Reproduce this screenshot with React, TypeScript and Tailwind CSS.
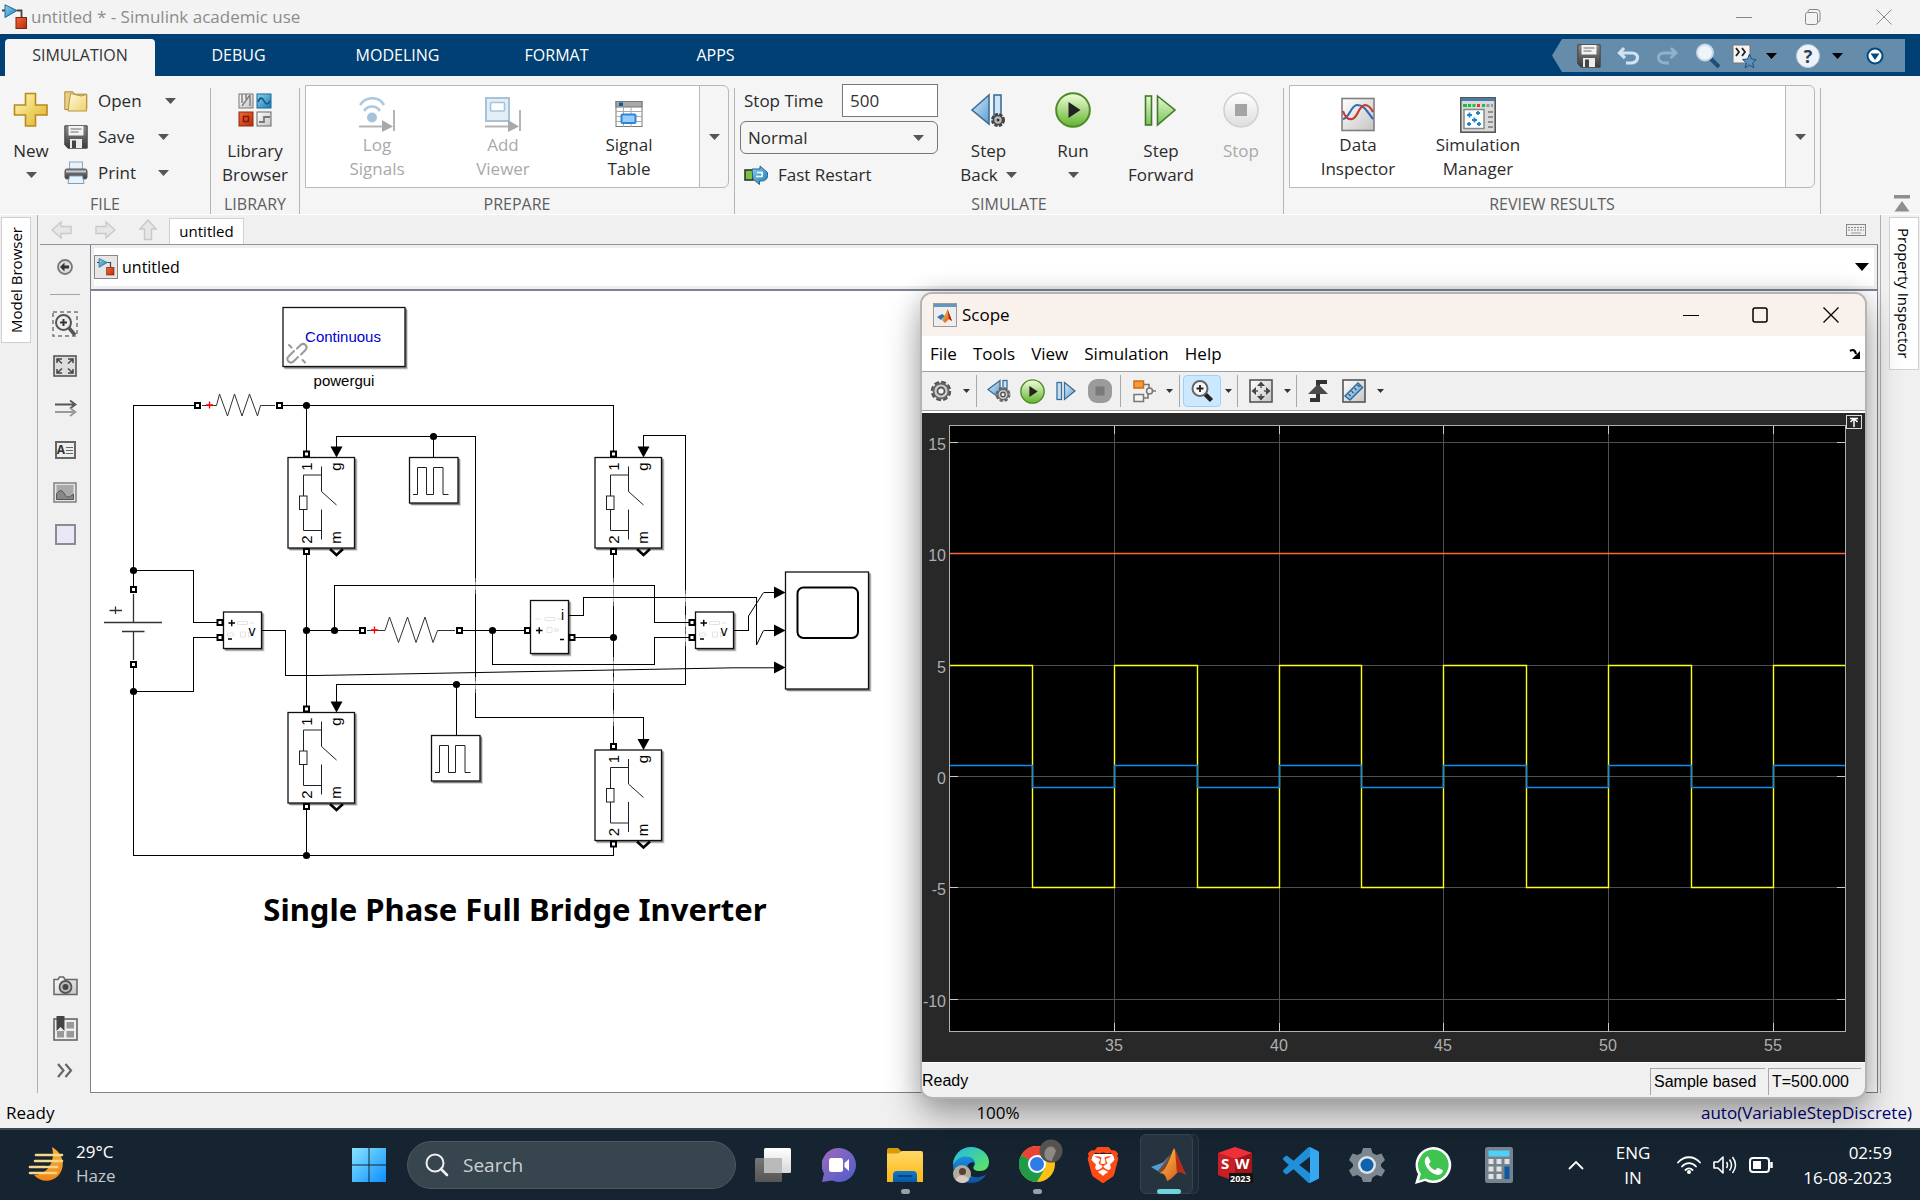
import type { ReactNode } from "react";
import { SiBrave } from "react-icons/si";

/* ---------- shared gradients ---------- */
function Defs() {
  const g = (id: string, a: string, b: string, diag = false) => (
    <linearGradient id={id} x1="0" y1="0" x2={diag ? "1" : "0"} y2="1">
      <stop offset="0" stopColor={a} />
      <stop offset="1" stopColor={b} />
    </linearGradient>
  );
  return (
    <svg className="absolute size-0" aria-hidden="true">
      <defs>
        {g("gold", "#fff9b8", "#e0b020", true)}
        {g("folder", "#fffbe0", "#efd06a", true)}
        {g("steel", "#8a8a8a", "#3a3a3a")}
        {g("silver", "#ffffff", "#c4c4c4", true)}
        {g("sky", "#d8ecfa", "#5a9cd0", true)}
        {g("blue", "#8fd0ee", "#1a7db8", true)}
        {g("red", "#f0693a", "#b82c08", true)}
        {g("green", "#f2ffdc", "#62b32e")}
        {g("lime", "#e4f8cf", "#7cc45c")}
        {g("fade", "#ffffff", "#dddddd")}
        {g("win", "#8be4ff", "#0a8fff", true)}
        {g("chat", "#a06ab8", "#4c5cd0", true)}
        {g("fold", "#ffd768", "#fcb912")}
        {g("dock", "#1478c8", "#0658a8")}
        {g("moon", "#f5b53a", "#f08418")}
        {g("edgeA", "#22b8e8", "#5fe85a", true)}
        {g("edgeB", "#1a8fe0", "#0c4fa0")}
        {g("flame", "#f8d040", "#d8401c", true)}
        {g("task", "#ffffff", "#d8d8d8")}
        {g("taskb", "#777777", "#555555")}
      </defs>
    </svg>
  );
}

function Svg({ w, h, vb, children, className = "" }: { w: number; h: number; vb?: string; children: ReactNode; className?: string }) {
  return (
    <svg width={w} height={h} viewBox={vb ?? `0 0 ${w} ${h}`} fill="none" className={`block shrink-0 ${className}`} aria-hidden="true">
      {children}
    </svg>
  );
}

function Caret({ small = false, className = "text-[#555]" }: { small?: boolean; className?: string }) {
  return small ? (
    <Svg w={7} h={4} className={className}><path d="M0 0h7L3.500 4z" fill="currentColor" /></Svg>
  ) : (
    <Svg w={11} h={6} className={className}><path d="M0 0h11L5.500 6z" fill="currentColor" /></Svg>
  );
}

/* ---------- ribbon icons ---------- */
const SimulinkIcon = ({ s = 26 }: { s?: number }) => (
  <Svg w={s} h={s} vb="0 0 26 26">
    <path d="M0 6.500h4M15 6.500h4.500V14" stroke="#444" strokeWidth="1.800" />
    <path d="M3 .8L15 6.500 3 13.500z" fill="url(#blue)" stroke="#1b6a99" />
    <rect x="14" y="13.500" width="10.500" height="11" fill="url(#red)" stroke="#7a2408" />
  </Svg>
);
const PlusIcon = () => (
  <Svg w={36} h={36}>
    <path d="M12.500 1.500h10v11.500h11.500v10H22.500v11h-10v-11H1.500V13h11z" fill="url(#gold)" stroke="#b78a1e" strokeWidth="1.600" />
  </Svg>
);
const OpenIcon = () => (
  <Svg w={24} h={22}>
    <path d="M.8 19.500V1.800h8l2 2.400h12V19z" fill="#e9cf86" stroke="#a8893f" />
    <path d="M6.500 3.500L17 6l5.500-1.500V21H4z" fill="url(#folder)" stroke="#b7963c" />
  </Svg>
);
const SaveIcon = () => (
  <Svg w={24} h={24}>
    <path d="M.8.8h22.400v22.400H4L.8 20z" fill="url(#steel)" stroke="#444" />
    <rect x="4.500" y="1" width="15" height="9.500" fill="#f3f3f3" />
    <path d="M6.500 4h11M6.500 7h8" stroke="#999" strokeWidth="1.400" />
    <rect x="6" y="14" width="12" height="9" fill="#ececec" />
    <rect x="8" y="15.500" width="4" height="7.500" fill="#444" />
  </Svg>
);
const PrintIcon = () => (
  <Svg w={24} h={24}>
    <rect x="5.500" y="1" width="13" height="9" fill="#e7f1fb" stroke="#89a8c2" />
    <rect x="1" y="8" width="22" height="10" rx="2" fill="url(#steel)" stroke="#555" />
    <path d="M2 10.500h20" stroke="#c9c9c9" strokeWidth="2" />
    <path d="M5.500 15h13l1.500 7.500H4z" fill="#eaf3fb" stroke="#7ba0bf" />
  </Svg>
);
const LibraryIcon = () => (
  <Svg w={34} h={36}>
    <rect x="1" y="2" width="14" height="14" fill="url(#silver)" stroke="#777" />
    <path d="M4 2v9M4 14L12 3M8 2v5M12 3v11" stroke="#808080" strokeWidth="1.500" />
    <rect x="19" y="2" width="14" height="14" fill="url(#blue)" stroke="#1c6590" />
    <path d="M20 10c2-5 4-5 6-1s4 4 6 0" stroke="#0d5682" strokeWidth="1.600" />
    <rect x="1" y="20" width="14" height="14" fill="url(#red)" stroke="#8f2b0c" />
    <rect x="5.500" y="24.500" width="5" height="5" stroke="#7a1c00" strokeWidth="1.400" />
    <rect x="19" y="20" width="14" height="14" fill="url(#silver)" stroke="#666" />
    <path d="M21 30h5v-5h6" stroke="#777" strokeWidth="1.800" />
  </Svg>
);
const LogIcon = () => (
  <Svg w={36} h={36}>
    <path d="M1 8c6-9 19-9 24 0M5 14c4-6 12-6 16 0" stroke="#abc9df" strokeWidth="2.600" />
    <circle cx="13" cy="20.500" r="5" fill="#a3c4dd" />
    <path d="M0 29.500h24M35 13v21" stroke="#b5b5b5" strokeWidth="2" />
    <path d="M23 23l11 6.500L23 35z" fill="#a9a9a9" />
  </Svg>
);
const ViewerIcon = () => (
  <Svg w={36} h={36}>
    <rect x="1" y="1" width="23" height="23" fill="#e3edf6" stroke="#a6c3da" strokeWidth="2" />
    <rect x="5.500" y="5.500" width="14" height="8.500" rx="1" fill="#fff" stroke="#a6c3da" strokeWidth="1.600" />
    <path d="M0 29.500h24M35 13v21" stroke="#b5b5b5" strokeWidth="2" />
    <path d="M23 23l11 6.500L23 35z" fill="#a9a9a9" />
  </Svg>
);
const TableIcon = () => (
  <Svg w={28} h={36}>
    <rect x="1" y="4.500" width="26" height="25" fill="#fff" stroke="#777" />
    <rect x="1" y="4.500" width="26" height="5.500" fill="#a8a8a8" stroke="#777" />
    <rect x="4" y="5.500" width="4" height="3.500" fill="#1656a8" />
    <path d="M1 14.500h26M1 19.500h26M1 24.500h26M8.500 10v20M16 10v20" stroke="#aaa" />
    <rect x="6.500" y="17.500" width="14" height="8.500" rx="1" fill="#9cccff" stroke="#2c86d8" strokeWidth="2" />
  </Svg>
);
const FastRestartIcon = () => (
  <Svg w={24} h={20}>
    <rect x="1" y="5" width="8" height="10" fill="#7cc23e" stroke="#333" strokeWidth="1.600" />
    <path d="M8 4h8V1l7.500 6.500v3c0 4-3 5.500-6 5.500h-2v3.500L9 14z" fill="url(#blue)" stroke="#2b5f86" />
    <path d="M13 7.500h5v4h-6" stroke="#fff" strokeWidth="1.600" />
  </Svg>
);
const StepBackIcon = () => (
  <Svg w={36} h={36}>
    <path d="M1 18L18 3v29z" fill="url(#sky)" stroke="#3c6e98" strokeWidth="1.600" />
    <rect x="23" y="3" width="7" height="22" fill="#cfe5f6" stroke="#3c6e98" strokeWidth="1.600" />
    <circle cx="27" cy="28" r="5.500" fill="#c8c8c8" stroke="#444" strokeWidth="3" strokeDasharray="3.200 1.200" />
    <circle cx="27" cy="28" r="4.500" fill="#bbb" stroke="#444" strokeWidth="1.600" />
    <circle cx="27" cy="28" r="1.500" fill="#333" />
  </Svg>
);
const RunIcon = ({ s = 36 }: { s?: number }) => (
  <Svg w={s} h={s} vb="0 0 36 36">
    <circle cx="18" cy="18" r="16.800" fill="url(#green)" stroke="#4f8a26" strokeWidth="2" />
    <path d="M13.500 10v16l12-8z" fill="#222" />
  </Svg>
);
const StepFwdIcon = () => (
  <Svg w={36} h={36}>
    <rect x="2.500" y="4" width="6" height="29" fill="url(#lime)" stroke="#3f7a28" strokeWidth="1.600" />
    <path d="M14.500 4L32 18 14.500 33z" fill="url(#lime)" stroke="#3f7a28" strokeWidth="1.600" />
  </Svg>
);
const StopIcon = () => (
  <Svg w={36} h={36}>
    <circle cx="18" cy="18" r="17" fill="url(#fade)" stroke="#cfcfcf" strokeWidth="1.500" />
    <rect x="12" y="12" width="12" height="12" fill="#a4a4a4" />
  </Svg>
);
const InspectorIcon = () => (
  <Svg w={34} h={36}>
    <rect x="1" y="1.500" width="32" height="32" fill="url(#silver)" stroke="#808080" strokeWidth="1.600" />
    <path d="M2 22c6 0 8-14 14-14s8 3 16 14" stroke="#2c6cb8" strokeWidth="2.200" />
    <path d="M2 14c2 6 5 9 9 8 6-1 6-13 13-14 4 0 6 3 8 7" stroke="#c43a30" strokeWidth="2.200" />
  </Svg>
);
const ManagerIcon = () => (
  <Svg w={36} h={36}>
    <rect x=".8" y=".8" width="34.400" height="34.400" fill="#d9d9d9" stroke="#555" strokeWidth="1.600" />
    <rect x="1" y="1" width="34" height="3" fill="#4a7ba8" />
    <path d="M3 8.500h4M8 8.500h3M12.500 8.500h3M22 8.500h3" stroke="#15c23c" strokeWidth="3" />
    <path d="M17 8.500h3" stroke="#e33" strokeWidth="3" />
    <path d="M26.500 8.500h3M31 8.500h2" stroke="#999" strokeWidth="3" />
    <rect x="4" y="12.500" width="20" height="19" fill="#fff" stroke="#888" strokeWidth="1.500" />
    <path d="M7 18h5M9.500 15.500v5M16 16h4M18 14v4M12 23h5M14.500 20.500v5M7 27h4M9 25v4M17 27h4M19 25v4" stroke="#1a86c8" strokeWidth="1.800" />
    <path d="M28 15h5M28 20h5M28 25h5M28 30h5" stroke="#777" strokeWidth="1.600" />
  </Svg>
);

/* ---------- ribbon ---------- */
function BigButton({ icon, lines, caret, disabled, className = "", gallery }: { icon: ReactNode; lines: string[]; caret?: "line" | "side"; disabled?: boolean; className?: string; gallery?: boolean }) {
  return (
    <button disabled={disabled} className={`flex shrink-0 flex-col items-center text-[17px] leading-6 ${gallery ? "pt-[11px]" : "pt-1"} ${disabled ? "text-[#a9a9a9]" : "text-[#2b2b2b]"} ${className}`}>
      <span className="flex h-9 items-center">{icon}</span>
      <span className={gallery ? "" : "mt-[11px]"}>{lines[0]}</span>
      {lines[1] && (
        <span className="flex items-center gap-2">
          {lines[1]}
          {caret === "side" && <Caret />}
        </span>
      )}
      {caret === "line" && <span className="flex h-6 items-center"><Caret /></span>}
    </button>
  );
}

function Section({ label, children, className }: { label: string; children: ReactNode; className: string }) {
  return (
    <section className={`mt-3 flex shrink-0 flex-col border-r border-[#b5b5b5] ${className}`}>
      <div className="flex h-[107px]">{children}</div>
      <h2 className="text-center text-base leading-[19px] text-[#5e5e5e]">{label}</h2>
    </section>
  );
}

function FileRow({ icon, label, wide }: { icon: ReactNode; label: string; wide?: boolean }) {
  return (
    <button className="flex h-9 items-center text-[17px] text-[#2b2b2b]">
      {icon}
      <span className={`ml-[10px] text-left ${wide ? "w-[67px]" : "w-[60px]"}`}>{label}</span>
      <Caret />
    </button>
  );
}

function Ribbon() {
  return (
    <div className="flex h-[139px] shrink-0 border-b border-white bg-[#f5f5f5]">
      <Section label="FILE" className="w-[211px]">
        <BigButton icon={<PlusIcon />} lines={["New"]} caret="line" className="w-[62px]" />
        <div className="-mt-[5px] ml-0.5 flex flex-col">
          <FileRow icon={<OpenIcon />} label="Open" wide />
          <FileRow icon={<SaveIcon />} label="Save" />
          <FileRow icon={<PrintIcon />} label="Print" />
        </div>
      </Section>
      <Section label="LIBRARY" className="w-[89px]">
        <BigButton icon={<LibraryIcon />} lines={["Library", "Browser"]} className="w-full" />
      </Section>
      <Section label="PREPARE" className="w-[435px]">
        <div className="-mt-[3px] mr-[5px] ml-[5px] flex h-[103px] flex-1 overflow-hidden rounded-r-md border border-[#b8b8b8]">
          <div className="flex flex-1 bg-white pl-2">
            <BigButton gallery disabled icon={<LogIcon />} lines={["Log", "Signals"]} className="w-[126px]" />
            <BigButton gallery disabled icon={<ViewerIcon />} lines={["Add", "Viewer"]} className="w-[126px]" />
            <BigButton gallery icon={<TableIcon />} lines={["Signal", "Table"]} className="w-[126px]" />
          </div>
          <button aria-label="More prepare tools" className="flex w-[29px] items-center justify-center border-l border-[#b8b8b8]"><Caret /></button>
        </div>
      </Section>
      <Section label="SIMULATE" className="w-[549px]">
        <div className="-mt-1 ml-[5px] flex w-[198px] flex-col">
          <div className="flex items-center justify-between">
            <label htmlFor="stop" className="pl-1 text-[17px] text-[#2b2b2b]">Stop Time</label>
            <input id="stop" defaultValue="500" className="h-[33px] w-24 border border-[#777] bg-white px-[7px] text-[17px] text-[#333] outline-none" />
          </div>
          <div className="relative mt-1">
            <select aria-label="Simulation mode" className="block h-[33px] w-full appearance-none rounded-md border border-[#777] bg-[#f5f5f5] px-[7px] text-[17px] text-[#2b2b2b] outline-none">
              <option>Normal</option>
            </select>
            <span className="pointer-events-none absolute top-[14px] right-[14px]"><Caret /></span>
          </div>
          <button className="mt-[3px] flex h-9 items-center gap-[10px] pl-1 text-[17px] text-[#2b2b2b]"><FastRestartIcon />Fast Restart</button>
        </div>
        <BigButton icon={<StepBackIcon />} lines={["Step", "Back"]} caret="side" className="w-[101px]" />
        <BigButton icon={<RunIcon />} lines={["Run"]} caret="line" className="w-[68px]" />
        <BigButton icon={<StepFwdIcon />} lines={["Step", "Forward"]} className="w-[108px]" />
        <BigButton disabled icon={<StopIcon />} lines={["Stop"]} className="w-[52px]" />
      </Section>
      <Section label="REVIEW RESULTS" className="w-[537px]">
        <div className="-mt-[3px] mr-[5px] ml-[5px] flex h-[103px] flex-1 overflow-hidden rounded-r-md border border-[#b8b8b8]">
          <div className="flex flex-1 bg-white pl-2">
            <BigButton gallery icon={<InspectorIcon />} lines={["Data", "Inspector"]} className="w-[120px]" />
            <BigButton gallery icon={<ManagerIcon />} lines={["Simulation", "Manager"]} className="w-[120px]" />
          </div>
          <button aria-label="More review tools" className="flex w-[29px] items-center justify-center border-l border-[#b8b8b8]"><Caret /></button>
        </div>
      </Section>
      <button aria-label="Collapse ribbon" className="mr-[10px] mb-0.5 ml-auto self-end text-[#8e8e8e]">
        <Svg w={16} h={17}><path d="M0 0h16v3.500H0zM8 6l7.500 10.500H.5z" fill="currentColor" /></Svg>
      </button>
    </div>
  );
}

/* ---------- title and tabs ---------- */
function TitleBar() {
  return (
    <header className="flex h-[34px] shrink-0 items-center bg-[#f3f3f3] pl-0.5">
      <SimulinkIcon />
      <h1 className="ml-[3px] flex-1 text-[17px] text-[#8c8c8c]">untitled * - Simulink academic use</h1>
      <button aria-label="Minimize" className="flex w-[69px] justify-center"><Svg w={16} h={16}><path d="M0 8.500h16" stroke="#888" /></Svg></button>
      <button aria-label="Restore" className="flex w-[70px] justify-center">
        <Svg w={16} h={16}><rect x=".5" y="3.500" width="12" height="12" rx="2" stroke="#888" /><path d="M3 3V2.500a2 2 0 0 1 2-2h7a3 3 0 0 1 3 3V11a2 2 0 0 1-2 2" stroke="#888" /></Svg>
      </button>
      <button aria-label="Close" className="flex w-[72px] justify-center"><Svg w={16} h={16}><path d="M.5.5l15 15m0-15l-15 15" stroke="#888" /></Svg></button>
    </header>
  );
}

function TabBar() {
  return (
    <nav className="flex h-[42px] shrink-0 items-end bg-[#004074] text-base text-white">
      <button className="mr-1 ml-[5px] h-[37px] w-[150px] rounded-t bg-[#f5f5f5] pb-1.5 text-[#333]">SIMULATION</button>
      {["DEBUG", "MODELING", "FORMAT", "APPS"].map((t) => (
        <button key={t} className="h-[37px] w-[159px] pb-1.5">{t}</button>
      ))}
      <div className="mr-[15px] mb-1 ml-auto flex h-[33px] w-[353px] items-center bg-[#668cab] pl-[25px] [clip-path:polygon(0_50%,10px_0,100%_0,100%_100%,10px_100%)]">
        <button aria-label="Save" className="w-10"><SaveIcon /></button>
        <button aria-label="Undo" className="w-[38px]"><Svg w={24} h={24}><path d="M7 4L2.500 9 8 14M3 9h12c8 0 7 10-1 10H9" stroke="#cfe3f4" strokeWidth="3.200" /></Svg></button>
        <button aria-label="Redo" className="w-10"><Svg w={24} h={24}><path d="M16 4l5 5-5.500 5M21 9H9C1 9 2 19 10 19h4" stroke="#8fb1cd" strokeWidth="2.800" /></Svg></button>
        <button aria-label="Find" className="w-[37px]"><Svg w={26} h={26}><path d="M15 15l9 9" stroke="#1e4f7c" strokeWidth="4" /><circle cx="10" cy="9.500" r="8" fill="#eef5fa" stroke="#c6d9e8" strokeWidth="2" /></Svg></button>
        <button aria-label="Favorites" className="flex w-[60px] shrink-0 items-center gap-[10px]">
          <Svg w={24} h={24}><rect x="1" y="1" width="17" height="18" fill="#f4f4f4" stroke="#777" /><path d="M4 4l3 4-3 4M10 4l3 4-3 4" stroke="#222" strokeWidth="1.800" /><path d="M17.500 10l2 5 5 .5-4 3.500 1.500 5-4.500-3-4.500 3 1.500-5-4-3.500 5-.5z" fill="#5d8fbd" stroke="#244f7a" /></Svg>
          <Caret className="text-black" />
        </button>
        <button aria-label="Help" className="flex w-[74px] shrink-0 items-center gap-[12px] pl-1">
          <span className="flex size-6 items-center justify-center rounded-full border border-[#b8cddd] bg-[#eef3f8] text-lg leading-6 font-bold text-[#2b3f55]">?</span>
          <Caret className="text-black" />
        </button>
        <button aria-label="Tab options"><Svg w={18} h={18}><circle cx="9" cy="9" r="7.500" fill="#fff" stroke="#004a80" strokeWidth="2" /><path d="M4.500 6.500h9L9 13z" fill="#004a80" /></Svg></button>
      </div>
    </nav>
  );
}

/* ---------- model diagram ---------- */
const Port = ({ x, y }: { x: number; y: number }) => <rect x={x - 2.5} y={y - 2.5} width="5" height="5" fill="#fff" stroke="#000" strokeWidth="2" />;
const Dot = ({ x, y }: { x: number; y: number }) => <circle cx={x} cy={y} r="3.600" fill="#000" stroke="none" />;
function Block({ x, y, w, h }: { x: number; y: number; w: number; h: number }) {
  return (
    <g>
      <rect x={x + 2} y={y + 2} width={w + 1} height={h + 1} fill="#000" opacity=".14" stroke="none" />
      <rect x={x + 1} y={y + 1} width={w + 1} height={h + 1} fill="#000" opacity=".4" stroke="none" />
      <rect x={x} y={y} width={w} height={h} fill="#fff" stroke="#111" strokeWidth="1.300" />
    </g>
  );
}
function Switch({ x, y }: { x: number; y: number }) {
  return (
    <g>
      <path d={`M${x + 42} ${y + 91.5}l6.500 6 6.500-6`} stroke="#000" strokeWidth="2.500" />
      <Block x={x} y={y} w={66.500} h={90.500} />
      <Port x={x + 18.5} y={y - 3.5} />
      <Port x={x + 18.5} y={y + 94} />
      <path d={`M${x + 42.5} ${y - 11}h12l-6 11z`} fill="#000" stroke="none" />
      <g transform={`translate(${x} ${y})`} stroke="#222">
        <path d="M33.500 9v25l15 13.500M33.500 17.500h-18v21M15.500 52v21h18M33.500 52v30" />
        <rect x="11.500" y="38.500" width="7.500" height="13.500" fill="#fff" />
      </g>
      <g fontSize="15" fill="#000" stroke="none" textAnchor="middle">
        <text transform={`translate(${x + 24} ${y + 9}) rotate(-90)`}>1</text>
        <text transform={`translate(${x + 53} ${y + 9}) rotate(-90)`}>g</text>
        <text transform={`translate(${x + 24} ${y + 82}) rotate(-90)`}>2</text>
        <text transform={`translate(${x + 53} ${y + 80}) rotate(-90)`}>m</text>
      </g>
    </g>
  );
}
const Pulse = ({ x, y }: { x: number; y: number }) => (
  <g>
    <Block x={x} y={y} w={48.500} h={45.500} />
    <path d={`M${x + 3.5} ${y + 37}h4.500v-27h9v27h7v-27h9.500v27h5.500`} stroke="#222" />
  </g>
);
const VMeter = ({ x, y }: { x: number; y: number }) => (
  <g>
    <Block x={x} y={y} w={38} h={36.500} />
    <path d={`M${x + 14} ${y + 9.5}h10v3h-10zM${x + 26} ${y + 11}h5M${x + 4} ${y + 21}h6v3h-6zM${x + 17} ${y + 20}h5v5h-5zM${x + 25} ${y + 20}l5 2.500-5 2.500z`} stroke="#e4e4e4" />
    <path d={`M${x + 5} ${y + 11}h6.500M${x + 8.25} ${y + 7.75}v6.500M${x + 4.5} ${y + 27}h4`} stroke="#000" strokeWidth="1.400" />
    <text x={x + 25} y={y + 24} fontSize="14" fill="#000" stroke="none">v</text>
    <Port x={x - 3.5} y={y + 10.5} />
    <Port x={x - 3.5} y={y + 25.5} />
  </g>
);
const Fade = ({ x, ys }: { x: number; ys: number[] }) => (
  <g stroke="#fff" strokeWidth="2">
    {ys.map((y) => (
      <g key={y}><path d={`M${x} ${y - 8}v16`} opacity=".35" /><path d={`M${x} ${y - 4}v8`} opacity=".5" /></g>
    ))}
  </g>
);

function Diagram() {
  return (
    <svg width="830" height="800" viewBox="91 291 830 800" fill="none" stroke="#000" className="block shrink-0 font-['Liberation_Sans',sans-serif]" role="img" aria-label="Single Phase Full Bridge Inverter model">
      <g shapeRendering="crispEdges">
        <path d="M475.500 436.500V717.500M613.500 552V746M685.500 435.500V684.500" />
        <Fade x={475.500} ys={[585.500, 684.500]} />
        <Fade x={613.500} ys={[585.500, 597.500, 664.500, 684.500, 717.500]} />
        <Fade x={685.500} ys={[597.500, 622.500, 637.500]} />
        <path d="M195 405.500H133.500V587M282 405.500H613.500V454M133.500 667V855.500H613.500V847M306.500 405.500V452M306.500 554V709M306.500 809V855.500" />
        <path d="M336.500 447V436.500H475.500M433.500 436.500V457M475.500 717.500H643.500V741M643.500 447V435.500H685.500M685.500 684.500H336.500V703M456.500 684.500V735" />
        <path d="M133.500 570.500H193.500V622.500H217M217 637.500H193.500V691.500H133.500M262 630.500H285.500V675.500H316" />
        <path d="M306.500 630.500H360M334.500 630.500V585.500H654.500V622.500H690M462 630.500H525M492.500 630.500V664.500H654.500V637.500H690M574 637.500H613.500M569 615.500H583.500V597.500H756.500V645M734 630.500H748.500V616M763.500 592.500H775M763.500 630.500H775" />
      </g>
      <path d="M316 675.500L734 667.800H775M748.500 616L763.500 592.500M756.500 645L763.500 630.500" />
      <g stroke="#333">
        <path d="M202 405.500H216.500L219.500 394 227.500 416 234.500 394 242 416 249.500 394 257.500 416 260.500 405.500H275" />
        <path d="M367 630.500H385L389.500 617 398.500 642.500 407.500 617 416 642.500 425 617 433 642.500 437.500 630.500H455" />
        <path d="M133.500 594V622M104 622.500H162M122 631.500H144.500M133.500 631V660M109.500 610.500H122M115.500 606.500V614" strokeWidth="1.300" />
      </g>
      <path d="M206 405h7M209.500 401.500v7M371 630h7M374.500 626.500v7" stroke="#f00" strokeWidth="1.300" />
      <Port x={197.500} y={405.500} /><Port x={279.500} y={405.500} />
      <Port x={133.500} y={589.500} /><Port x={133.500} y={664.500} />
      <Port x={362.500} y={630.500} /><Port x={459.500} y={630.500} />
      {[[306.5, 405.5], [433.5, 436.5], [133.5, 570.5], [133.5, 691.5], [306.5, 630.5], [334.5, 630.5], [492.5, 630.5], [613.5, 637.5], [456.5, 684.5], [306.5, 855.5]].map(([x, y]) => (
        <Dot key={`${x}-${y}`} x={x} y={y} />
      ))}

      <Block x={283} y={307.500} w={122} h={59} />
      <g stroke="#999" strokeWidth="2" strokeLinecap="round">
        <path d="M297 348.500l3-3c4-4 9 1 5 5l-4 4M294 351l-5 5c-4 4 1 9 5 5l4-4M289 345l2.500 2.500M302.500 360l2.500 2.500" />
      </g>
      <text x="343" y="342" textAnchor="middle" fontSize="15" fill="#0000d0" stroke="none">Continuous</text>
      <text x="344" y="386" textAnchor="middle" fontSize="15" fill="#000" stroke="none">powergui</text>

      <Switch x={288} y={457.500} />
      <Switch x={595} y={457.500} />
      <Switch x={288} y={712.500} />
      <Switch x={595} y={750} />
      <Pulse x={409.500} y={457.500} />
      <Pulse x={431.500} y={735.500} />
      <VMeter x={223.500} y={612} />
      <VMeter x={695.500} y={612} />

      <Block x={530.500} y={600.500} w={38} h={53} />
      <path d="M545 617.500h10v3h-10zM535 619h6M557 619h6M547 627.500h5v5h-5zM555 628l4 2-4 2z" stroke="#e4e4e4" />
      <path d="M536 630.500h6.500M539.250 627.250v6.500M560 639.500h4" strokeWidth="1.400" />
      <text x="561" y="620" fontSize="14" fill="#000" stroke="none">i</text>
      <Port x={527.500} y={630.500} /><Port x={572} y={637.500} />

      <Block x={785.500} y={572} w={83} h={117} />
      <rect x="797.500" y="587.500" width="60.500" height="50.500" rx="6" strokeWidth="2" />
      {[592.5, 630.5, 667.5].map((y) => <path key={y} d={`M774 ${y - 6}v12l11.500-6z`} fill="#000" stroke="none" />)}
      <text x="515" y="921" textAnchor="middle" className="font-['Noto_Sans',sans-serif] font-bold" fontSize="31" fill="#000" stroke="none">Single Phase Full Bridge Inverter</text>
    </svg>
  );
}

/* ---------- editor ---------- */
function Tool({ label, children }: { label: string; children: ReactNode }) {
  return <button aria-label={label} className="flex h-[42px] w-full shrink-0 items-center justify-center">{children}</button>;
}

function Palette() {
  return (
    <aside className="flex w-[50px] shrink-0 flex-col items-center pt-px pb-0.5">
      <Tool label="Hide browser"><Svg w={18} h={18}><circle cx="9" cy="9" r="7" fill="#ddd" stroke="#777" strokeWidth="1.800" /><path d="M8.500 4.500v3H13v3H8.500v3L4 9z" fill="#333" /></Svg></Tool>
      <hr className="mt-1.5 mb-2 w-[30px] border-[#a5a5a5]" />
      <Tool label="Zoom"><Svg w={26} h={26}><path d="M1 1h24v24H1z" stroke="#777" strokeDasharray="4 3" strokeWidth="1.500" /><circle cx="11.500" cy="11.500" r="7.500" fill="#eee" stroke="#555" strokeWidth="2" /><path d="M8 11.500h7M11.500 8v7" stroke="#333" strokeWidth="2" /><path d="M17 17l6 7" stroke="#555" strokeWidth="3.500" /></Svg></Tool>
      <Tool label="Fit to view"><Svg w={24} h={22}><rect x="1" y="1" width="22" height="20" fill="#ddd" stroke="#555" strokeWidth="1.600" /><path d="M4 8V4h5M4 4l5 4.500M20 8V4h-5M20 4l-5 4.500M4 14v4h5M4 18l5-4.500M20 14v4h-5M20 18l-5-4.500" stroke="#444" strokeWidth="1.500" /></Svg></Tool>
      <Tool label="Sample time"><Svg w={23} h={18}><path d="M1 5.500h20M16 1.500l5.500 4-5.500 4" stroke="#555" strokeWidth="1.800" /><path d="M1 13h20M16 9l5.500 4-5.500 4" stroke="#999" strokeWidth="1.800" /></Svg></Tool>
      <Tool label="Annotation">
        <span className="flex h-[18px] w-[21px] items-center justify-center gap-px border-2 border-[#666] bg-[#eee] text-xs leading-3 font-bold text-[#333]">A<Svg w={7} h={9}><path d="M0 1.500h7M0 4.500h7M0 7.500h7" stroke="#666" /></Svg></span>
      </Tool>
      <Tool label="Image"><Svg w={24} h={21}><rect x="1" y="1" width="22" height="19" fill="#e3e3e3" stroke="#888" strokeWidth="1.600" /><rect x="3.500" y="3" width="17" height="14.500" fill="#a9a9a9" /><path d="M3.500 12c3-5 6-4 8 0s5 4 9 0v5.500h-17z" fill="#888" stroke="#555" /></Svg></Tool>
      <Tool label="Area"><span className="block size-[21px] border-2 border-[#8c8c90] bg-[#e8e8f8]" /></Tool>
      <div className="flex-1" />
      <Tool label="Screenshot"><Svg w={25} h={20}><path d="M1 3.500h4L6.500 1h4L12 3.500h12v15H1z" fill="url(#silver)" stroke="#666" strokeWidth="1.500" /><circle cx="12.500" cy="11" r="6" fill="#bbb" stroke="#555" strokeWidth="1.800" /><circle cx="12.500" cy="11" r="3" fill="#444" /></Svg></Tool>
      <Tool label="Bookmarks"><Svg w={25} h={25}><rect x="1" y="3" width="23" height="21" fill="#eee" stroke="#666" strokeWidth="1.600" /><path d="M13.500 6h7.500v6.500h-7.500zM13.500 15H21v6.500h-7.500zM4 15h7v6.500H4z" fill="#999" /><path d="M3.500 0h8v15l-4-4-4 4z" fill="#444" /></Svg></Tool>
      <Tool label="Expand palette"><Svg w={16} h={15}><path d="M1 1l5.500 6.500L1 14M8.500 1L14 7.500 8.500 14" stroke="#666" strokeWidth="2.200" /></Svg></Tool>
    </aside>
  );
}

function NavArrow({ label, d }: { label: string; d: string }) {
  return <button aria-label={label} disabled className="flex w-[43px] justify-center"><Svg w={22} h={22}><path d={d} fill="#e6e6e6" stroke="#c9c9c9" strokeWidth="1.400" /></Svg></button>;
}

function Editor() {
  return (
    <main className="flex min-w-0 flex-1 flex-col">
      <div className="flex h-[30px] shrink-0 items-center border-b border-[#8f949c]">
        <NavArrow label="Back" d="M1 11l9-8v4.500h10v7H10V19z" />
        <NavArrow label="Forward" d="M21 11l-9-8v4.500H2v7h10V19z" />
        <NavArrow label="Up" d="M11 1l8 9h-4.500v10.500h-7V10H3z" />
        <button className="h-[26px] w-[75px] self-end border border-b-0 border-[#d0d0d0] bg-white text-[15px] text-black">untitled</button>
        <Svg w={20} h={12} className="mr-3 ml-auto"><rect x=".5" y=".5" width="19" height="11" fill="#eee" stroke="#888" /><path d="M2 3.500h16M2 6h16" stroke="#888" strokeDasharray="2 1" /><path d="M5 9h10" stroke="#999" /></Svg>
      </div>
      <div className="flex min-h-0 flex-1">
        <Palette />
        <div className="flex min-w-0 flex-1 flex-col border-r border-b border-l border-[#7d8290] bg-white">
          <div className="flex h-[46px] shrink-0 items-center border-b-2 border-[#7d8290] bg-white pl-[3px] shadow-[inset_0_0_0_3px_#efefef]">
            <span className="flex size-6 items-center justify-center border border-[#888] bg-[#e6e6e6]"><SimulinkIcon s={18} /></span>
            <span className="ml-1 text-base text-black">untitled</span>
            <button aria-label="Model hierarchy" className="mr-2 ml-auto"><Svg w={14} h={8}><path d="M0 0h14L7 8z" fill="#000" /></Svg></button>
          </div>
          <div className="min-h-0 flex-1 overflow-hidden"><Diagram /></div>
        </div>
      </div>
    </main>
  );
}

/* ---------- scope ---------- */
function ScopePlot() {
  const xs = [1114.5, 1279.5, 1443.5, 1608.5, 1773.5];
  const ys = [442.5, 553.5, 665.5, 776.5, 887.5, 999.5];
  const square = (hi: number, lo: number) =>
    `M950 ${hi}` + xs.map((x) => `H${x - 82}V${lo}H${x}V${hi}`).join("") + "H1845";
  return (
    <svg viewBox="922 413 943 649" className="block w-full bg-[#282828] font-['Liberation_Sans',sans-serif]" fill="none" role="img" aria-label="Scope signals">
      <g shapeRendering="crispEdges">
        <rect x="949.500" y="425.500" width="896" height="606" fill="#000" stroke="#afafaf" />
        {xs.map((x) => (
          <g key={x}>
            <path d={`M${x} 426V1031`} stroke="#505050" />
            <path d={`M${x} 426v8M${x} 1031v-8`} stroke="#c8c8c8" />
          </g>
        ))}
        {ys.map((y) => (
          <g key={y}>
            <path d={`M950 ${y}H1845`} stroke="#505050" />
            <path d={`M950 ${y}h8M1845 ${y}h-8`} stroke="#c8c8c8" />
          </g>
        ))}
      </g>
      <path d={square(665.5, 887.5)} stroke="#ffff11" strokeWidth="1.400" />
      <path d={square(765.5, 787.5)} stroke="#138bf0" strokeWidth="1.400" />
      <path d="M950 553.500H1845" stroke="#ff6929" strokeWidth="1.400" />
      <g fill="#afafaf" fontSize="16">
        {ys.map((y, i) => <text key={y} x="946" y={y + 7} textAnchor="end">{15 - 5 * i}</text>)}
        {xs.map((x, i) => <text key={x} x={x - 0.5} y="1051" textAnchor="middle">{35 + 5 * i}</text>)}
      </g>
      <rect x="1846.500" y="415.500" width="15" height="13" fill="#282828" stroke="#ddd" />
      <path d="M1854 427v-8M1850.500 422l3.500-3.500 3.500 3.500M1850 418.500h8" stroke="#fff" strokeWidth="1.500" />
    </svg>
  );
}

const Sep = ({ className }: { className: string }) => <span className={`flex h-8 shrink-0 justify-center ${className}`}><span className="w-px bg-[#a8a8a8]" /></span>;
function Tb({ label, className, children }: { label: string; className: string; children: ReactNode }) {
  return <button aria-label={label} className={`flex h-8 shrink-0 items-center justify-center ${className}`}>{children}</button>;
}

function ScopeToolbar() {
  const c = <Caret small className="text-[#333]" />;
  return (
    <div className="flex h-[38px] items-center bg-[#f0f0f0] pl-px">
      <Tb label="Configuration" className="w-9"><Svg w={22} h={22}><circle cx="11" cy="11" r="8.500" stroke="#555" strokeWidth="3.500" strokeDasharray="4.500 2.170" /><circle cx="11" cy="11" r="7.500" fill="#ccc" stroke="#666" strokeWidth="1.800" /><circle cx="11" cy="11" r="3.500" fill="#f4f4f4" stroke="#555" strokeWidth="1.800" /></Svg></Tb>
      <Tb label="Configuration menu" className="w-[14px]">{c}</Tb>
      <Sep className="w-1.5" />
      <Tb label="Step back" className="w-10">
        <Svg w={24} h={24}>
          <path d="M1 10.500L13 1.500v18z" fill="url(#sky)" stroke="#3c6e98" strokeWidth="1.300" />
          <rect x="16" y="1.500" width="4" height="14" fill="#cfe5f6" stroke="#3c6e98" strokeWidth="1.300" />
          <circle cx="16" cy="15.500" r="6" stroke="#666" strokeWidth="3" strokeDasharray="3 1.700" />
          <circle cx="16" cy="15.500" r="5.200" fill="#ccc" stroke="#666" strokeWidth="1.400" />
          <circle cx="16" cy="15.500" r="2.200" fill="#f4f4f4" stroke="#555" strokeWidth="1.400" />
        </Svg>
      </Tb>
      <Tb label="Run" className="w-[26px]"><RunIcon s={25} /></Tb>
      <Tb label="Step forward" className="w-[42px]"><Svg w={20} h={20}><rect x="1" y="1.500" width="4.500" height="17" fill="#c5dff3" stroke="#3c6e98" strokeWidth="1.300" /><path d="M8.500 1.500L19 10 8.500 18.500z" fill="url(#sky)" stroke="#3c6e98" strokeWidth="1.300" /></Svg></Tb>
      <Tb label="Stop" className="w-[26px]"><Svg w={24} h={24}><rect width="24" height="24" rx="9" fill="#9b9b9b" /><rect x="7.500" y="7.500" width="9" height="9" fill="#7a7a7a" /></Svg></Tb>
      <Sep className="w-[14px]" />
      <Tb label="Highlight block" className="w-[34px]"><Svg w={24} h={24}><path d="M11 5.500h6v4M12 19h4v-4M20 12h4" stroke="#777" strokeWidth="1.600" /><rect x="2" y="2" width="9.500" height="7" fill="#f49a3a" stroke="#d06a10" strokeWidth="1.500" /><rect x="2" y="15.500" width="9.500" height="7" fill="#f4f4f4" stroke="#777" strokeWidth="1.500" /><circle cx="17.500" cy="12" r="3" fill="#eee" stroke="#777" strokeWidth="1.500" /></Svg></Tb>
      <Tb label="Highlight menu" className="w-4">{c}</Tb>
      <Sep className="w-1" />
      <Tb label="Zoom" className="ml-0.5 w-[38px] rounded-sm border border-[#99d1ff] bg-[#cce8ff]"><Svg w={24} h={24}><path d="M15 15l6.500 6.500" stroke="#222" strokeWidth="4.500" /><circle cx="10" cy="9.500" r="7.500" fill="#f8f8f8" stroke="#666" strokeWidth="2" /><path d="M6.500 9.500h7M10 6v7" stroke="#222" strokeWidth="1.800" /></Svg></Tb>
      <Tb label="Zoom menu" className="w-[14px]">{c}</Tb>
      <Sep className="w-1" />
      <Tb label="Scale axes" className="w-11">
        <Svg w={24} h={24}>
          <rect x="1" y="1" width="22" height="22" fill="url(#silver)" stroke="#555" strokeWidth="1.600" />
          <path d="M12 2.500l4 4.500H8zM12 21.500l4-4.500H8zM2.500 12L7 8v8zM21.500 12L17 8v8z" fill="#444" />
          <path d="M12 6v3M12 15v3M6 12h3M15 12h3" stroke="#555" strokeWidth="1.500" />
        </Svg>
      </Tb>
      <Tb label="Scale menu" className="w-2">{c}</Tb>
      <Sep className="w-[10px]" />
      <Tb label="Triggers" className="w-[34px]"><Svg w={22} h={24}><path d="M3 21h8V3h9" stroke="#333" strokeWidth="4" /><path d="M11 5l10 10H1z" fill="#4a4a4a" /></Svg></Tb>
      <Tb label="Measurements" className="w-[38px]"><Svg w={24} h={24}><rect x="1" y="1" width="22" height="22" fill="url(#silver)" stroke="#555" strokeWidth="1.600" /><path d="M3 17L16 4l4.500 4.500L8 21z" fill="url(#sky)" stroke="#2f6a98" strokeWidth="1.500" /><path d="M6.500 15l2 2M9.500 12l2 2M12.500 9l2 2M15.500 6l2 2" stroke="#2f5878" strokeWidth="1.300" /></Svg></Tb>
      <Tb label="Measurements menu" className="w-[14px]">{c}</Tb>
    </div>
  );
}

function ScopeWindow() {
  return (
    <section aria-label="Scope" className="absolute top-[292px] left-[920px] w-[947px] overflow-hidden rounded-xl border-2 border-[#b4b4b4] bg-[#f0f0f0] shadow-[0_18px_36px_rgba(0,0,0,0.32),0_0_24px_rgba(0,0,0,0.14)]">
      <div className="flex h-[42px] items-center bg-[#f9f1ec] pl-[11px]">
        <Svg w={24} h={24}>
          <rect x=".5" y=".5" width="23" height="23" fill="#eee" stroke="#999" />
          <path d="M1 1h22v3H1z" fill="#6296bd" />
          <path d="M4 14l5-3 3 2-4 4z" fill="#2878b8" />
          <path d="M9 17l3-5 2.500-6L19 18l-3-2-4 4z" fill="url(#flame)" />
          <path d="M14.500 6L19 18l-3-2z" fill="#a32010" />
        </Svg>
        <h2 className="ml-[5px] flex-1 text-[17px] text-black">Scope</h2>
        <button aria-label="Minimize scope" className="flex w-16 justify-center"><Svg w={16} h={16}><path d="M0 8.500h16" stroke="#000" /></Svg></button>
        <button aria-label="Maximize scope" className="flex w-[74px] justify-center"><Svg w={16} h={16}><rect x="1" y="1" width="14" height="14" rx="2" stroke="#000" strokeWidth="1.500" /></Svg></button>
        <button aria-label="Close scope" className="flex w-[68px] justify-center"><Svg w={16} h={16}><path d="M.5.5l15 15m0-15l-15 15" stroke="#000" strokeWidth="1.300" /></Svg></button>
      </div>
      <div className="flex h-9 items-center gap-4 border-b border-[#a0a0a0] bg-white px-2 text-[17px] text-black">
        {["File", "Tools", "View", "Simulation", "Help"].map((m) => <button key={m}>{m}</button>)}
        <button aria-label="Dock" className="-mr-1 ml-auto"><Svg w={12} h={12}><path d="M1 3c3-2 5-1 6 3" stroke="#000" strokeWidth="2.200" /><path d="M11 3v8H3z" fill="#000" /></Svg></button>
      </div>
      <ScopeToolbar />
      <div className="h-[3px] border-t border-[#a0a0a0] bg-white" />
      <ScopePlot />
      <div className="flex h-[35px] items-center border-t border-white pt-0.5 font-['Liberation_Sans',sans-serif] text-base text-black">
        <span className="flex-1">Ready</span>
        <span className="mr-[3px] flex h-[27px] w-[115px] items-center border-t border-l border-[#a8a8a8] pl-[3px]">Sample based</span>
        <span className="mr-1 flex h-[27px] w-[93px] items-center border-t border-l border-[#a8a8a8] pl-[3px]">T=500.000</span>
      </div>
    </section>
  );
}

/* ---------- taskbar ---------- */
function TaskButton({ label, children, running }: { label: string; children: ReactNode; running?: boolean }) {
  return (
    <button aria-label={label} className="relative flex h-full w-[66px] shrink-0 items-center justify-center">
      {children}
      {running && <span className="absolute bottom-1.5 h-[5px] w-[9px] rounded-full bg-[#9aa1a6]" />}
    </button>
  );
}

function Taskbar() {
  return (
    <footer className="flex h-[72px] shrink-0 items-center border-t-2 border-[#3b464f] bg-[#152430] text-white">
      <button className="flex w-[336px] items-center gap-3 pb-0.5 pl-7 text-left text-[17px] leading-6">
        <Svg w={36} h={34}>
          <path d="M24 0c12 7 14 20 6 29-7 7-18 6-24-1 12 0 22-12 18-28z" fill="url(#moon)" />
          <path d="M8 8h26M7 14h27M2 20h27M2 26h26" stroke="#f7d888" strokeWidth="2.600" strokeLinecap="round" strokeDasharray="16 2 30" />
        </Svg>
        <span><span className="block">29°C</span><span className="block text-[#c3c8cc]">Haze</span></span>
      </button>
      <TaskButton label="Start"><Svg w={34} h={34}><path d="M0 0h16.500v16.500H0zM17.500 0H34v16.500H17.500zM0 17.500h16.500V34H0zM17.500 17.500H34V34H17.500z" fill="url(#win)" /></Svg></TaskButton>
      <label className="mr-1 ml-[5px] flex h-12 w-[329px] items-center rounded-full border border-[#4c5962] bg-[#37454f] pl-[17px]">
        <Svg w={24} h={24}><circle cx="10" cy="10" r="8.500" stroke="#eee" strokeWidth="2" /><path d="M16 16l6 6" stroke="#eee" strokeWidth="2.600" strokeLinecap="round" /></Svg>
        <input aria-label="Search" placeholder="Search" className="ml-[14px] w-60 bg-transparent text-[19px] outline-none placeholder:text-[#cdd1d4]" />
      </label>
      <TaskButton label="Task view"><Svg w={36} h={34}><rect y="10" width="27" height="24" rx="1.500" fill="url(#taskb)" /><rect x="9" width="27" height="25" rx="1.500" fill="url(#task)" /><path d="M9 10h18v15H9z" fill="#b9bbbb" /></Svg></TaskButton>
      <TaskButton label="Chat"><Svg w={34} h={34}><path d="M17 0a17 17 0 1 1-7 32.500L0 34l2-8.500A17 17 0 0 1 17 0z" fill="url(#chat)" /><rect x="7" y="10" width="14" height="14" rx="2.500" fill="#fff" /><path d="M22.500 15l4.500-4v12l-4.500-4z" fill="#fff" /></Svg></TaskButton>
      <TaskButton label="File Explorer" running><Svg w={36} h={34}><path d="M0 2c0-1 .5-2 2-2h9l4 4v6H0z" fill="#d99a06" /><path d="M0 5.500h11l4-2.500h19q2 0 2 2v29H0z" fill="url(#fold)" /><path d="M6 34v-7q0-4 4-4h16q4 0 4 4v7z" fill="url(#dock)" /><path d="M11 28h14" stroke="#0b4580" strokeWidth="2" /></Svg></TaskButton>
      <TaskButton label="Edge">
        <Svg w={36} h={36}>
          <path d="M0 18C0 8 8 0 18 0c10 0 18 7 18 15 0 6-4 9-9 9-5 0-8-2-6-5 1-2 1-3 0-4-3-5-14-5-21 3z" fill="url(#edgeA)" />
          <path d="M0 18c3-6 8-8.500 13-8.500 6 0 9 3.500 9 6.500-3-2-8 0-8 6 0 8 10 11 19 5.500C30 33 25 36 18 36 7 36 0 28 0 18z" fill="url(#edgeB)" />
          <circle cx="9" cy="27" r="9" fill="#b5aca0" /><circle cx="9.500" cy="24.500" r="3.500" fill="#5d3f32" /><path d="M3 33c1-6 11-6 13 0-4 4-9 4-13 0z" fill="#d8c9c4" />
        </Svg>
      </TaskButton>
      <TaskButton label="Chrome" running>
        <Svg w={44} h={44} className="mb-2 ml-2">
          <circle cx="18" cy="25" r="18" fill="#fbc116" />
          <path d="M18 25L2.400 16A18 18 0 0 1 33.600 16H18z" fill="#ea4335" />
          <path d="M18 25L2.400 16A18 18 0 0 0 18 43l7.800-13.500z" fill="#1e9a48" />
          <circle cx="18" cy="25" r="9" fill="#fff" /><circle cx="18" cy="25" r="7" fill="#2f7bea" />
          <circle cx="32" cy="12" r="11.500" fill="#55534f" /><path d="M26 18c-3-9 8-15 11-6-1 4-3 5-4 10-3 0-6-1-7-4z" fill="#8d8a85" />
        </Svg>
      </TaskButton>
      <TaskButton label="Brave">
        <span className="grid place-items-center">
          <Svg w={36} h={36} className="col-start-1 row-start-1"><path d="M8 7h20l2 6-5 14-7 5-7-5-5-14z" fill="#fff" /></Svg>
          <SiBrave size={36} color="#ff4a16" className="col-start-1 row-start-1" />
        </span>
      </TaskButton>
      <TaskButton label="MATLAB">
        <span className="absolute top-1 left-[50px] h-[60px] w-[13px] rounded-r-md border border-l-0 border-[#2c3944] bg-[#1d2a35]" />
        <span className="absolute top-1 left-1 h-[60px] w-[53px] rounded-md border border-[#36424d] bg-[#26343f]" />
        <Svg w={36} h={34} className="relative">
          <path d="M0 19l12-4.500L18 8l-3 14-5 3z" fill="#4f9fd2" />
          <path d="M7 23l7-9 6-9-4 18-6 3z" fill="#7a4a3c" />
          <path d="M9 25c7-3 9-14 14-25 4 8 7 17 12 27-5-4-8-4-11 0-3 3-5 5-8 6-1-5-3-8-7-8z" fill="url(#flame)" />
          <path d="M23.500 0C27 8 31 18 35 27c-5-4-7-4-9-2-1-9-1-17-2.500-25z" fill="#b52c18" />
        </Svg>
        <span className="absolute bottom-1.5 left-[21px] h-[5px] w-6 rounded-full bg-[#6fd3dc]" />
      </TaskButton>
      <TaskButton label="SolidWorks 2023">
        <Svg w={40} h={44} vb="-2 -4 40 44">
          <path d="M18 0l17 6v22L18 34 1 28V6z" fill="#a3141b" /><path d="M18 0l17 6-17 6L1 6z" fill="#ee3038" /><path d="M18 12v22L1 28V6z" fill="#c81e26" />
          <text x="4" y="22" fontSize="15" fontWeight="bold" fill="#fff">S</text><text x="18" y="22" fontSize="15" fontWeight="bold" fill="#fff">W</text>
          <rect x="12" y="26" width="24" height="10" fill="#111" /><text x="13" y="35" fontSize="9" fontWeight="bold" fill="#fff">2023</text>
        </Svg>
      </TaskButton>
      <TaskButton label="Visual Studio Code"><Svg w={36} h={36} vb="0 0 24 24"><path fill="#1f8fd8" d="M23.150 2.587L18.210.21a1.494 1.494 0 0 0-1.705.29l-9.460 8.630-4.120-3.128a.999.999 0 0 0-1.276.057L.327 7.261A1 1 0 0 0 .326 8.740L3.899 12 .326 15.260a1 1 0 0 0 .001 1.479L1.650 17.940a.999.999 0 0 0 1.276.057l4.120-3.128 9.460 8.630a1.492 1.492 0 0 0 1.704.290l4.942-2.377A1.500 1.500 0 0 0 24 20.060V3.939a1.500 1.500 0 0 0-.850-1.352zm-5.146 14.861L10.826 12l7.178-5.448v10.896z" /><path d="M18 .2l5.200 2.400q.8.400.8 1.300v16.200q0 .9-.8 1.300L18 23.800z" fill="#35a8f0" /></Svg></TaskButton>
      <TaskButton label="Settings"><Svg w={36} h={36}><path d="M14 1h8l1.500 5 4 2 5-1.500 3.500 6.500-4 4v2.500l4 4-3.500 6-5-1.500-4 2.500L22 35h-8l-1.500-4.500-4-2.500-5 1.500L0 23.500l4-4V17l-4-4 3.500-6.500 5 1.500 4-2z" fill="#7d8790" /><circle cx="18" cy="18" r="9" fill="#dde3e8" /><circle cx="18" cy="18" r="6.500" fill="#0f62ac" /></Svg></TaskButton>
      <TaskButton label="WhatsApp"><Svg w={37} h={37}><path d="M18.500 0a18 18 0 1 1-8.500 34L0 37l3-10A18 18 0 0 1 18.500 0z" fill="#fff" /><path d="M18.500 2.500a15.500 15.500 0 1 1-8 29L4 33.500 6 27A15.500 15.500 0 0 1 18.500 2.500z" fill="#3fc351" /><path d="M13 9.500l2.800 5-2 2.800c1.600 3 3.700 4.800 6.400 6l2.400-2.600 5.400 2.600c-.5 4-4 5.200-7 4.300C15 25.500 10.500 20.500 9.800 15c0-3 1-5.500 3.200-5.500z" fill="#fff" /></Svg></TaskButton>
      <TaskButton label="Calculator"><Svg w={28} h={36}><rect width="28" height="36" rx="2.500" fill="#76828c" /><rect x="3.500" y="3.500" width="21" height="6" fill="#4ed0f8" /><path d="M3.500 12h5v5h-5zM11.500 12h5v5h-5zM19.500 12h5v5h-5zM3.500 19.500h5v5h-5zM11.500 19.500h5v5h-5zM3.500 27h5v5h-5zM11.500 27h5v5h-5z" fill="#dfe3e6" /><path d="M19.500 19.500h5V32h-5z" fill="#0c5aa6" /></Svg></TaskButton>
      <div className="mr-7 ml-auto flex items-center text-[17px] leading-[25px]">
        <button aria-label="Hidden icons" className="mr-8"><Svg w={16} h={10}><path d="M1 9l7-7 7 7" stroke="#fff" strokeWidth="1.800" /></Svg></button>
        <button className="mr-[27px] text-center">ENG<br />IN</button>
        <button aria-label="Network, sound and battery" className="flex items-center gap-3">
          <Svg w={24} h={18}><path d="M1 6.500c6-7 16-7 22 0M5 10.500c4-4.500 10-4.500 14 0M8.500 14c2-2 5-2 7 0" stroke="#fff" strokeWidth="1.800" strokeLinecap="round" /><circle cx="12" cy="16" r="2" fill="#fff" /></Svg>
          <Svg w={24} h={20}><path d="M1 7h4l5-5v16l-5-5H1z" stroke="#fff" strokeWidth="1.600" strokeLinejoin="round" /><path d="M13.500 7q2 3 0 6M16.500 4.500q4 5.500 0 11M19.500 2q6 8 0 16" stroke="#fff" strokeWidth="1.500" /></Svg>
          <Svg w={24} h={16}><rect x="1" y="1" width="19" height="14" rx="3" stroke="#fff" strokeWidth="2" /><rect x="4" y="4" width="8" height="8" fill="#fff" /><path d="M22.500 5v6" stroke="#fff" strokeWidth="2.500" /></Svg>
        </button>
        <button className="ml-[30px] text-right">02:59<br />16-08-2023</button>
      </div>
    </footer>
  );
}

export default function App() {
  return (
    <div className="relative flex h-screen min-h-[900px] flex-col overflow-hidden bg-[#f0f0f0] font-['Open_Sans',sans-serif]">
      <Defs />
      <TitleBar />
      <TabBar />
      <Ribbon />
      <div className="flex min-h-0 flex-1">
        <div className="mr-0.5 w-[38px] shrink-0 border-r border-[#b0b0b0] pt-0.5 pl-px">
          <button className="h-[126px] w-[30px] rotate-180 border border-[#d0d0d0] bg-white text-[15px] leading-[26px] text-black [writing-mode:vertical-rl]">Model Browser</button>
        </div>
        <Editor />
        <div className="ml-0.5 w-10 shrink-0 border-l border-[#b0b0b0] pt-0.5 pl-2">
          <button className="h-[153px] w-[30px] border border-[#d0d0d0] bg-white text-[15px] leading-[26px] text-black [writing-mode:vertical-rl]">Property Inspector</button>
        </div>
      </div>
      <div className="grid h-[35px] shrink-0 grid-cols-3 items-center px-1.5 pt-1 text-[17px] text-black">
        <span>Ready</span>
        <span className="text-center">
          <span className="pl-[76px]">100%</span>
        </span>
        <span className="pr-0.5 text-right text-[#000078]">auto(VariableStepDiscrete)</span>
      </div>
      <ScopeWindow />
      <Taskbar />
    </div>
  );
}
